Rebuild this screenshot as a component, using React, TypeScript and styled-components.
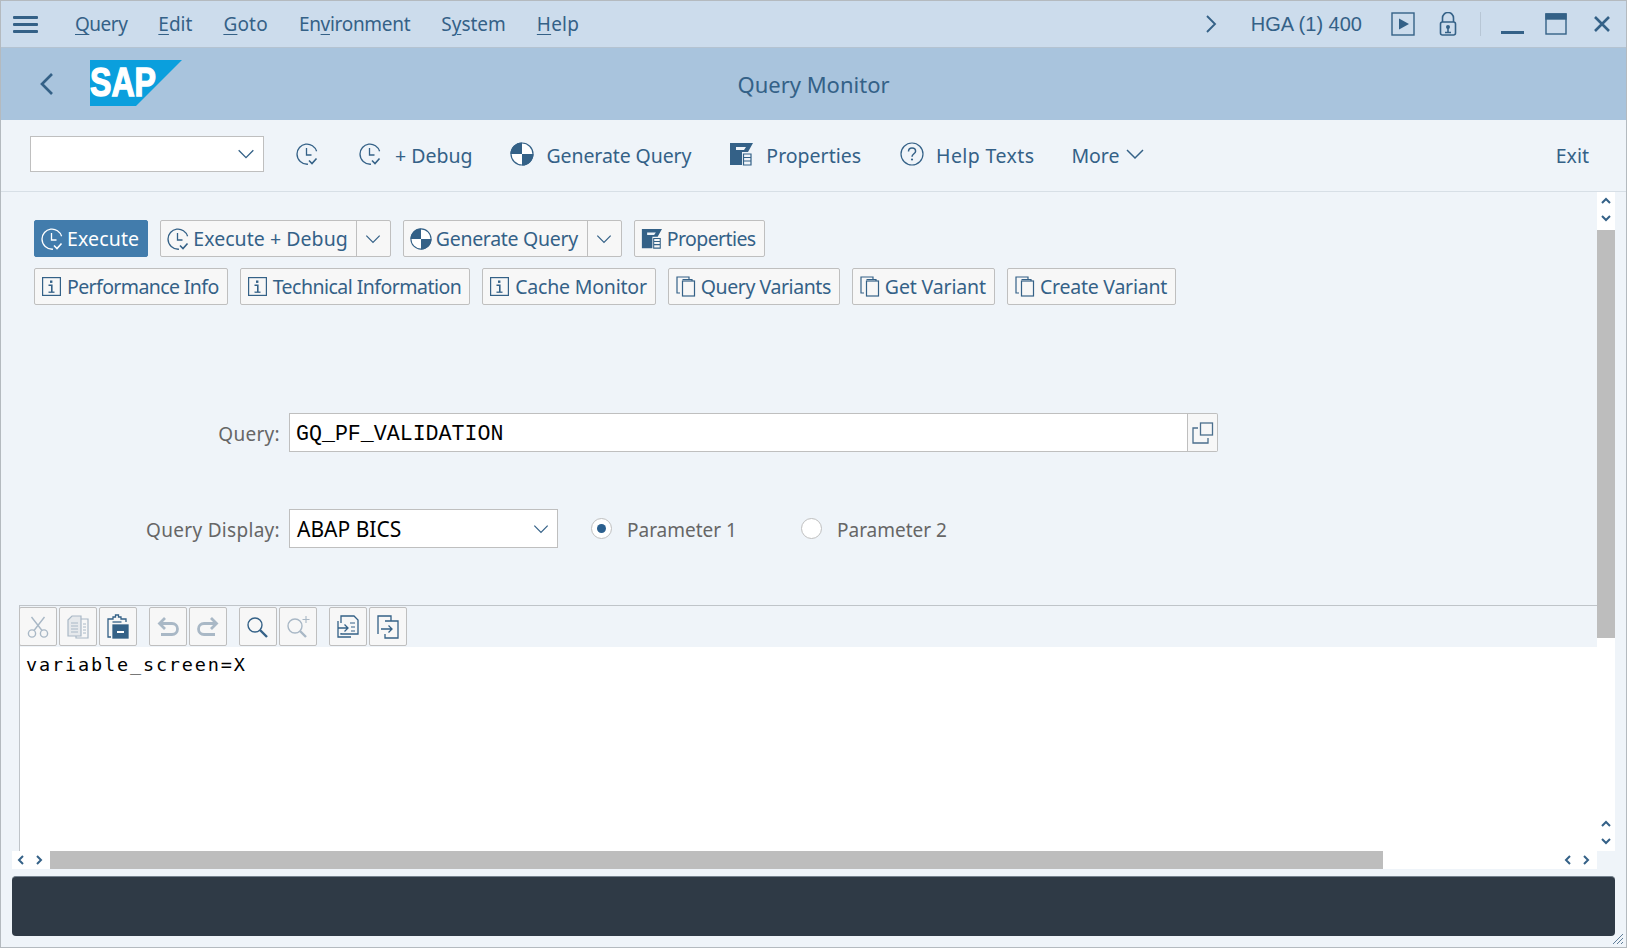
import React from 'react';
import styled, { createGlobalStyle } from 'styled-components';

const ink = '#346187';
const soft = '#a9b8c6';

const Global = createGlobalStyle`
  html, body { margin: 0; padding: 0; background: #eff4f9; }
  body { font-family: "Noto Sans", "Open Sans", sans-serif; }
`;

const Window = styled.div`
  width: 1627px;
  height: 948px;
  box-sizing: border-box;
  border: 1px solid #b4babf;
  display: flex;
  flex-direction: column;
  overflow: hidden;
  background: #eff4f9;
`;

const MenuBar = styled.div`
  height: 46px;
  flex: none;
  background: #ccdcec;
  display: flex;
  align-items: center;
  padding: 0 15px 0 12px;
  color: ${ink};
  font-size: 19px;
`;

const Burger = styled.div`
  width: 25px;
  height: 17px;
  margin-right: 37px;
  display: flex;
  flex-direction: column;
  justify-content: space-between;
  span {
    height: 3px;
    background: ${ink};
    border-radius: 1px;
  }
`;

const MenuItem = styled.span<{ $track: number }>`
  margin-right: 31px;
  letter-spacing: ${(p) => p.$track}px;
  u { text-underline-offset: 3px; text-decoration-thickness: 1px; }
`;

const Spring = styled.div`
  flex: 1;
`;

const SystemId = styled.span`
  margin: 1px 29px 0 28px;
  font-family: "Liberation Sans", sans-serif;
  font-size: 20px;
`;

const Separator = styled.div`
  width: 1px;
  height: 24px;
  background: #b7c6d5;
  margin: 0 20px 0 23px;
`;

const TitleBar = styled.div`
  height: 73px;
  flex: none;
  background: #a9c4dd;
  display: flex;
  align-items: center;
  position: relative;
  padding-left: 31px;
  border-top: 1px solid #b4c3d1;
  box-sizing: border-box;
`;

const Title = styled.div`
  position: absolute;
  left: 0;
  right: 0;
  top: 21px;
  text-align: center;
  color: ${ink};
  font-size: 22px;
`;

const Logo = styled.svg`
  margin-left: 28px;
  margin-top: -3px;
`;

const ToolBar = styled.div`
  height: 72px;
  flex: none;
  display: flex;
  align-items: center;
  padding: 0 37px 3px 29px;
  border-bottom: 1px solid #d7dfe6;
  box-sizing: border-box;
  color: ${ink};
  font-size: 19.5px;
`;

const EmptySelect = styled.div`
  width: 234px;
  height: 36px;
  box-sizing: border-box;
  background: #fff;
  border: 1px solid #bfbfbf;
  display: flex;
  align-items: center;
  justify-content: flex-end;
  padding-right: 6px;
`;

const ToolItem = styled.div<{ $gap: number; $left: number; $track?: number }>`
  display: flex;
  align-items: center;
  gap: ${(p) => p.$gap}px;
  margin-left: ${(p) => p.$left}px;
  letter-spacing: ${(p) => p.$track ?? 0}px;
  white-space: nowrap;
`;

const ToolLabel = styled.span`
  margin-top: 3px;
`;

const Body = styled.div`
  flex: 1;
  position: relative;
  min-height: 0;
  display: flex;
  flex-direction: column;
`;

const TopArea = styled.div`
  height: 455px;
  flex: none;
  display: flex;
`;

const LeftColumn = styled.div`
  flex: 1;
  min-width: 0;
  display: flex;
  flex-direction: column;
`;

const Form = styled.div`
  height: 413px;
  flex: none;
  padding: 28px 0 0 33px;
  box-sizing: border-box;
`;

const ButtonRow = styled.div`
  display: flex;
  gap: 12px;
  margin-bottom: 11px;
`;

const Btn = styled.div<{ $primary?: boolean }>`
  height: 37px;
  box-sizing: border-box;
  display: flex;
  align-items: center;
  border-radius: 2px;
  border: 1px solid ${(p) => (p.$primary ? '#427cac' : '#bfbfbf')};
  background: ${(p) => (p.$primary ? '#427cac' : '#f7f7f7')};
  color: ${(p) => (p.$primary ? '#fff' : ink)};
  font-size: 19.5px;
  white-space: nowrap;
`;

const BtnMain = styled.div<{ $pad: number; $gap: number; $track: number; $end?: number }>`
  display: flex;
  align-items: center;
  gap: ${(p) => p.$gap}px;
  padding: 0 ${(p) => p.$end ?? 8}px 0 ${(p) => p.$pad}px;
  height: 100%;
  letter-spacing: ${(p) => p.$track}px;
`;

const BtnArrow = styled.div`
  width: 33px;
  height: 100%;
  border-left: 1px solid #bfbfbf;
  display: flex;
  align-items: center;
  justify-content: center;
`;

const Field = styled.div<{ $top: number }>`
  display: flex;
  align-items: center;
  margin-top: ${(p) => p.$top}px;
  margin-left: -33px;
`;

const FieldLabel = styled.div`
  width: 288px;
  text-align: right;
  padding: 2px 9px 0 0;
  box-sizing: border-box;
  color: #666;
  font-size: 19px;
  letter-spacing: 0.3px;
`;

const QueryInput = styled.div`
  width: 899px;
  height: 39px;
  box-sizing: border-box;
  background: #fff;
  border: 1px solid #bfbfbf;
  display: flex;
  align-items: center;
  padding: 2px 0 0 6px;
  color: #000;
  font-family: "Liberation Mono", monospace;
  font-size: 21.6px;
`;

const QueryHelp = styled.div`
  width: 30px;
  height: 39px;
  box-sizing: border-box;
  border: 1px solid #bfbfbf;
  border-left: none;
  border-radius: 0 2px 2px 0;
  background: #f7f7f7;
  display: flex;
  align-items: center;
  justify-content: center;
`;

const DisplaySelect = styled.div`
  width: 269px;
  height: 39px;
  box-sizing: border-box;
  background: #fff;
  border: 1px solid #bfbfbf;
  display: flex;
  align-items: center;
  justify-content: space-between;
  padding: 0 6px 0 7px;
  color: #000;
  font-size: 21px;
`;

const RadioGroup = styled.div<{ $left: number }>`
  display: flex;
  align-items: center;
  gap: 15px;
  margin-left: ${(p) => p.$left}px;
  color: #666;
  font-size: 19px;
  line-height: 28px;
`;

const RadioText = styled.span`
  padding-top: 2px;
`;

const RadioDot = styled.div<{ $on?: boolean }>`
  width: 21px;
  height: 21px;
  box-sizing: border-box;
  border-radius: 50%;
  background: #fff;
  border: 1px solid #bfbfbf;
  display: flex;
  align-items: center;
  justify-content: center;
  &::after {
    content: '';
    display: ${(p) => (p.$on ? 'block' : 'none')};
    width: 9px;
    height: 9px;
    border-radius: 50%;
    background: #2b5f8e;
  }
`;

const VScroll = styled.div`
  width: 18px;
  flex: none;
  margin-right: 11px;
  display: flex;
  flex-direction: column;
`;

const ScrollButtons = styled.div<{ $lift?: number }>`
  height: 38px;
  flex: none;
  box-sizing: border-box;
  padding-bottom: ${(p) => p.$lift ?? 0}px;
  background: #fff;
  display: flex;
  flex-direction: column;
  align-items: center;
  justify-content: center;
  gap: 5px;
`;

const Thumb = styled.div`
  flex: 1;
  background: #bdbdbd;
`;

const ThumbEnd = styled.div`
  height: 9px;
  flex: none;
  background: #fff;
`;

const EditorTools = styled.div`
  height: 42px;
  flex: none;
  margin-left: 18px;
  display: flex;
  box-sizing: border-box;
  align-items: flex-start;
  padding-top: 1px;
  border-top: 1px solid #bfc4c9;
  border-left: 1px solid #bfc4c9;
  & > :first-child {
    margin-left: -1px;
  }
`;

const ToolGroup = styled.div`
  display: flex;
  gap: 2px;
  margin-right: 12px;
`;

const ToolBtn = styled.div`
  width: 38px;
  height: 39px;
  box-sizing: border-box;
  border: 1px solid #bfbfbf;
  border-radius: 2px;
  background: #f7f7f7;
  display: flex;
  align-items: center;
  justify-content: center;
`;

const EditorText = styled.div`
  height: 204px;
  flex: none;
  margin: 0 11px 0 18px;
  border-left: 1px solid #bfc4c9;
  background: #fff;
  display: flex;
`;

const Code = styled.div`
  flex: 1;
  padding: 7px 0 0 6px;
  color: #000;
  font-family: "DejaVu Sans Mono", monospace;
  font-size: 18.5px;
  letter-spacing: 1.85px;
`;

const CodeScroll = styled.div`
  width: 18px;
  display: flex;
  flex-direction: column;
  justify-content: flex-end;
`;

const HScroll = styled.div`
  height: 18px;
  flex: none;
  display: flex;
  margin: 0 29px 0 11px;
`;

const HButtons = styled.div`
  width: 38px;
  box-sizing: border-box;
  padding-right: 2px;
  flex: none;
  background: #fff;
  display: flex;
  align-items: center;
  justify-content: center;
  gap: 6px;
`;

const HTrack = styled.div`
  flex: 1;
  background: #fff;
  display: flex;
`;

const HThumb = styled.div`
  width: 1333px;
  background: #bdbdbd;
`;

const MessageBar = styled.div`
  height: 60px;
  flex: none;
  margin: 7px 11px 0 11px;
  background: #2f3a46;
  border-radius: 4px;
  border-top: 1px solid #75828e;
  box-sizing: border-box;
`;

const Grip = styled.svg`
  position: absolute;
  right: 2px;
  bottom: 2px;
`;

const Chevron = ({ dir, size = 18, color = ink, w = 1.4 }: { dir: 'up' | 'down' | 'left' | 'right'; size?: number; color?: string; w?: number }) => {
  const d = { up: 'M3 12 9 6l6 6', down: 'M3 6l6 6 6-6', left: 'M12 3 6 9l6 6', right: 'M6 3l6 6-6 6' }[dir];
  return (
    <svg width={size} height={size} viewBox="0 0 18 18" fill="none" stroke={color} strokeWidth={w}>
      <path d={d} />
    </svg>
  );
};

const ClockCheck = ({ color = ink, size = 24 }: { color?: string; size?: number }) => (
  <svg width={size} height={size} viewBox="0 0 24 24" fill="none" stroke={color} strokeWidth="1.3">
    <path d="M13 22.2C7 22.6 2 18 2 12A10 10 0 0 1 21.6 9.300" />
    <path d="M11.500 6v7h5" />
    <path d="M14 18.500l3 3 4.500-5" strokeWidth="1.6" />
  </svg>
);

const QuarterDisc = ({ size = 24 }: { size?: number }) => (
  <svg width={size} height={size} viewBox="0 0 24 24">
    <circle cx="12" cy="12" r="11.500" fill="#fff" />
    <path d="M12 0.500A11.500 11.500 0 0 0 0.500 12H12ZM12 12H23.500A11.500 11.500 0 0 1 12 23.500Z" fill={ink} />
    <circle cx="12" cy="12" r="11" fill="none" stroke={ink} strokeWidth="1.2" />
  </svg>
);

const PropsIcon = ({ size = 24 }: { size?: number }) => (
  <svg width={size} height={size} viewBox="0 0 24 24">
    <path d="M1 1H24L19 10H13V23H1Z" fill={ink} />
    <path d="M14.500 12H22V23H14.500ZM14.500 15.500H22M14.500 19H22" fill="none" stroke={ink} strokeWidth="1.2" />
    <path d="M7 5H17L15 8H7Z" fill="#eff4f9" />
  </svg>
);

const InfoIcon = () => (
  <svg width="19" height="19" viewBox="0 0 19 19" fill="none" stroke={ink}>
    <rect x="0.600" y="0.600" width="17.800" height="17.800" strokeWidth="1.2" />
    <rect x="8" y="3.500" width="2.400" height="2.400" fill={ink} stroke="none" />
    <path d="M6.500 8.200h3.300V15" strokeWidth="1.6" />
    <path d="M6.500 15.200h6" strokeWidth="1.3" />
  </svg>
);

const PagesIcon = () => (
  <svg width="20" height="21" viewBox="0 0 20 21" fill="none" stroke={ink} strokeWidth="1.2">
    <rect x="6.500" y="5" width="12" height="15" />
    <path d="M4 17H1V1h12v2" />
    <path d="M6.500 3.500H16v1.500" />
  </svg>
);

const HelpCircle = () => (
  <svg width="24" height="24" viewBox="0 0 24 24" fill="none" stroke={ink} strokeWidth="1.2">
    <circle cx="12" cy="12" r="11" />
    <path d="M8.500 9.500C8.500 7 10 6 12 6s3.600 1.300 3.600 3.200c0 2.400-3.600 2.800-3.600 5.600" strokeWidth="1.5" />
    <circle cx="12" cy="17.500" r="1.100" fill={ink} stroke="none" />
  </svg>
);

const CopyIcon = () => (
  <svg width="22" height="22" viewBox="0 0 22 22" fill="none" stroke="#4c6f8d" strokeWidth="1.3">
    <rect x="8.500" y="1" width="12" height="12" />
    <path d="M6 6H1v15h15v-5" />
  </svg>
);

const CutIcon = () => (
  <svg width="22" height="24" viewBox="0 0 22 24" fill="none" stroke={soft} strokeWidth="1.4">
    <circle cx="5" cy="18.500" r="3.600" />
    <circle cx="17" cy="18.500" r="3.600" />
    <path d="M7 15.500 17.500 2M15 15.500 4.500 2" />
  </svg>
);

const CopyDocIcon = () => (
  <svg width="22" height="24" viewBox="0 0 22 24" fill="none" stroke={soft} strokeWidth="1.2">
    <path d="M1 5 5 1H14V21H1Z" fill="#e6e9ec" />
    <path d="M14 4H21V23H9V21" />
    <path d="M4 8h7M4 11h7M4 14h7M4 17h7M16 9h3M16 12h3M16 15h3M16 18h3" strokeWidth="1" />
  </svg>
);

const PasteIcon = () => (
  <svg width="22" height="25" viewBox="0 0 22 25" fill="none" stroke={ink} strokeWidth="1.3">
    <path d="M4 23H1V5h5V3h2.500V1h3v2H14v2h5v3" />
    <path d="M5.500 8h9" />
    <rect x="6" y="11" width="15" height="13" fill={ink} />
    <path d="M10 18h7" stroke="#fff" strokeWidth="2" />
  </svg>
);

const UndoIcon = ({ flip }: { flip?: boolean }) => (
  <svg width="24" height="22" viewBox="0 0 24 22" fill="none" stroke={soft} strokeWidth="2.8" style={flip ? { transform: 'scaleX(-1)' } : undefined}>
    <path d="M9 2 3.500 7.500 9 13" />
    <path d="M4 7.500h12a5.500 5.500 0 0 1 0 11H5" />
  </svg>
);

const SearchIcon = ({ plus }: { plus?: boolean }) => (
  <svg width="24" height="24" viewBox="0 0 24 24" fill="none" stroke={plus ? soft : ink} strokeWidth="1.4">
    <circle cx="9" cy={plus ? 11 : 10} r="7" />
    <path d={plus ? 'M14 16l6 6' : 'M14 15l7 7'} strokeWidth="2.4" />
    {plus && <path d="M20 1v7M16.500 4.500h7" strokeWidth="1.1" />}
  </svg>
);

const DocArrowLeft = () => (
  <svg width="22" height="24" viewBox="0 0 22 24" fill="none" stroke={ink} strokeWidth="1.3">
    <path d="M4 8V1h13l4 4v14H4v-1" />
    <path d="M1 6v16h13" />
    <path d="M1 13h10M7.500 9.500 11 13l-3.500 3.500" />
    <path d="M13 8h5M14 12h4M14 16h4" strokeWidth="1" />
  </svg>
);

const DocArrowRight = () => (
  <svg width="22" height="24" viewBox="0 0 22 24" fill="none" stroke={ink} strokeWidth="1.3">
    <path d="M1 19V1h13v5" />
    <path d="M8 6h13v17H8v-4" />
    <path d="M4 14h11M11.500 10.500 15 14l-3.500 3.500" />
  </svg>
);

const SapLogo = () => (
  <Logo width="92" height="46" viewBox="0 0 92 46">
    <path d="M0 0H92L46 46H0Z" fill="#0a9fdd" />
    <text x="0" y="36" fill="#fff" stroke="#fff" strokeWidth="1.4" fontFamily="Liberation Sans, sans-serif" fontWeight="700" fontSize="40" textLength="66" lengthAdjust="spacingAndGlyphs">
      SAP
    </text>
  </Logo>
);

const infoButtons: [string, number][] = [
  ['Performance Info', -0.6],
  ['Technical Information', -0.53],
  ['Cache Monitor', -0.2],
];

const variantButtons: [string, number][] = [
  ['Query Variants', -0.43],
  ['Get Variant', -0.15],
  ['Create Variant', -0.23],
];

const App = () => (
  <>
    <Global />
    <Window>
      <MenuBar>
        <Burger>
          <span />
          <span />
          <span />
        </Burger>
        <MenuItem $track={-0.5}>
          <u>Q</u>uery
        </MenuItem>
        <MenuItem $track={0}>
          <u>E</u>dit
        </MenuItem>
        <MenuItem $track={0.2}>
          <u>G</u>oto
        </MenuItem>
        <MenuItem $track={-0.3}>
          En<u>v</u>ironment
        </MenuItem>
        <MenuItem $track={0}>
          S<u>y</u>stem
        </MenuItem>
        <MenuItem $track={0.2}>
          <u>H</u>elp
        </MenuItem>
        <Spring />
        <Chevron dir="right" size={24} />
        <SystemId>HGA (1) 400</SystemId>
        <svg width="24" height="24" viewBox="0 0 24 24" fill="none" stroke={ink} strokeWidth="1.4">
          <rect x="1" y="1" width="22" height="22" />
          <path d="M8 6.500 18 12 8 17.500Z" fill={ink} stroke="none" />
        </svg>
        <svg width="18" height="24" viewBox="0 0 18 24" fill="none" stroke={ink} strokeWidth="1.6" style={{ marginLeft: 24 }}>
          <path d="M3.500 10V6a5.500 5.500 0 0 1 11 0v4" />
          <rect x="1.500" y="10" width="15" height="13" rx="2" />
          <circle cx="9" cy="15" r="2" fill={ink} stroke="none" />
          <path d="M6 20.500h6M9 16v4" />
        </svg>
        <Separator />
        <svg width="24" height="24" viewBox="0 0 24 24" fill={ink}>
          <rect x="0" y="19" width="23" height="3" />
        </svg>
        <svg width="22" height="22" viewBox="0 0 22 22" fill="none" stroke={ink} strokeWidth="1.4" style={{ marginLeft: 20 }}>
          <rect x="1" y="1" width="20" height="20" />
          <rect x="1" y="1" width="20" height="5" fill={ink} />
        </svg>
        <svg width="18" height="18" viewBox="0 0 18 18" fill="none" stroke={ink} strokeWidth="2.6" style={{ marginLeft: 26 }}>
          <path d="M2 2l14 14M16 2 2 16" />
        </svg>
      </MenuBar>
      <TitleBar>
        <Chevron dir="left" size={30} w={1.6} />
        <SapLogo />
        <Title>Query Monitor</Title>
      </TitleBar>
      <ToolBar>
        <EmptySelect>
          <Chevron dir="down" size={22} w={1.1} />
        </EmptySelect>
        <ToolItem $gap={0} $left={31}>
          <ClockCheck />
        </ToolItem>
        <ToolItem $gap={13} $left={39}>
          <ClockCheck />
          <ToolLabel>+ Debug</ToolLabel>
        </ToolItem>
        <ToolItem $gap={13} $left={37} $track={-0.1}>
          <QuarterDisc />
          <ToolLabel>Generate Query</ToolLabel>
        </ToolItem>
        <ToolItem $gap={13} $left={38}>
          <PropsIcon />
          <ToolLabel>Properties</ToolLabel>
        </ToolItem>
        <ToolItem $gap={12} $left={39} $track={0.4}>
          <HelpCircle />
          <ToolLabel>Help Texts</ToolLabel>
        </ToolItem>
        <ToolItem $gap={3} $left={37}>
          <ToolLabel>More</ToolLabel>
          <Chevron dir="down" size={24} w={1.1} />
        </ToolItem>
        <Spring />
        <ToolLabel>Exit</ToolLabel>
      </ToolBar>
      <Body>
        <TopArea>
          <LeftColumn>
            <Form>
              <ButtonRow>
                <Btn $primary>
                  <BtnMain $pad={5} $gap={3} $track={0.15}>
                    <ClockCheck color="#fff" />
                    Execute
                  </BtnMain>
                </Btn>
                <Btn>
                  <BtnMain $pad={5} $gap={3} $track={0.05}>
                    <ClockCheck />
                    Execute + Debug
                  </BtnMain>
                  <BtnArrow>
                    <Chevron dir="down" size={20} w={1.1} />
                  </BtnArrow>
                </Btn>
                <Btn>
                  <BtnMain $pad={6} $gap={4} $track={-0.3} $end={9}>
                    <QuarterDisc size={22} />
                    Generate Query
                  </BtnMain>
                  <BtnArrow>
                    <Chevron dir="down" size={20} w={1.1} />
                  </BtnArrow>
                </Btn>
                <Btn>
                  <BtnMain $pad={6} $gap={5} $track={-0.6}>
                    <PropsIcon size={21} />
                    Properties
                  </BtnMain>
                </Btn>
              </ButtonRow>
              <ButtonRow>
                {infoButtons.map(([label, track]) => (
                  <Btn key={label}>
                    <BtnMain $pad={7} $gap={6} $track={track}>
                      <InfoIcon />
                      {label}
                    </BtnMain>
                  </Btn>
                ))}
                {variantButtons.map(([label, track]) => (
                  <Btn key={label}>
                    <BtnMain $pad={7} $gap={5} $track={track}>
                      <PagesIcon />
                      {label}
                    </BtnMain>
                  </Btn>
                ))}
              </ButtonRow>
              <Field $top={108}>
                <FieldLabel>Query:</FieldLabel>
                <QueryInput>GQ_PF_VALIDATION</QueryInput>
                <QueryHelp>
                  <CopyIcon />
                </QueryHelp>
              </Field>
              <Field $top={57}>
                <FieldLabel>Query Display:</FieldLabel>
                <DisplaySelect>
                  ABAP BICS
                  <Chevron dir="down" size={20} w={1.1} />
                </DisplaySelect>
                <RadioGroup $left={33}>
                  <RadioDot $on />
                  <RadioText>Parameter 1</RadioText>
                </RadioGroup>
                <RadioGroup $left={64}>
                  <RadioDot />
                  <RadioText>Parameter 2</RadioText>
                </RadioGroup>
              </Field>
            </Form>
            <EditorTools>
              <ToolGroup>
                <ToolBtn>
                  <CutIcon />
                </ToolBtn>
                <ToolBtn>
                  <CopyDocIcon />
                </ToolBtn>
                <ToolBtn>
                  <PasteIcon />
                </ToolBtn>
              </ToolGroup>
              <ToolGroup>
                <ToolBtn>
                  <UndoIcon />
                </ToolBtn>
                <ToolBtn>
                  <UndoIcon flip />
                </ToolBtn>
              </ToolGroup>
              <ToolGroup>
                <ToolBtn>
                  <SearchIcon />
                </ToolBtn>
                <ToolBtn>
                  <SearchIcon plus />
                </ToolBtn>
              </ToolGroup>
              <ToolGroup>
                <ToolBtn>
                  <DocArrowLeft />
                </ToolBtn>
                <ToolBtn>
                  <DocArrowRight />
                </ToolBtn>
              </ToolGroup>
            </EditorTools>
          </LeftColumn>
          <VScroll>
            <ScrollButtons $lift={3}>
              <Chevron dir="up" size={12} w={3} />
              <Chevron dir="down" size={12} w={3} />
            </ScrollButtons>
            <Thumb />
            <ThumbEnd />
          </VScroll>
        </TopArea>
        <EditorText>
          <Code>variable_screen=X</Code>
          <CodeScroll>
            <ScrollButtons>
              <Chevron dir="up" size={12} w={3} />
              <Chevron dir="down" size={12} w={3} />
            </ScrollButtons>
          </CodeScroll>
        </EditorText>
        <HScroll>
          <HButtons>
            <Chevron dir="left" size={12} w={3} />
            <Chevron dir="right" size={12} w={3} />
          </HButtons>
          <HTrack>
            <HThumb />
          </HTrack>
          <HButtons>
            <Chevron dir="left" size={12} w={3} />
            <Chevron dir="right" size={12} w={3} />
          </HButtons>
        </HScroll>
        <MessageBar />
        <Grip width="12" height="12" viewBox="0 0 12 12" fill="none" stroke="#5f7d98" strokeWidth="1">
          <path d="M1 11 11 1M5 11l6-6M9 11l2-2" />
        </Grip>
      </Body>
    </Window>
  </>
);

export default App;
